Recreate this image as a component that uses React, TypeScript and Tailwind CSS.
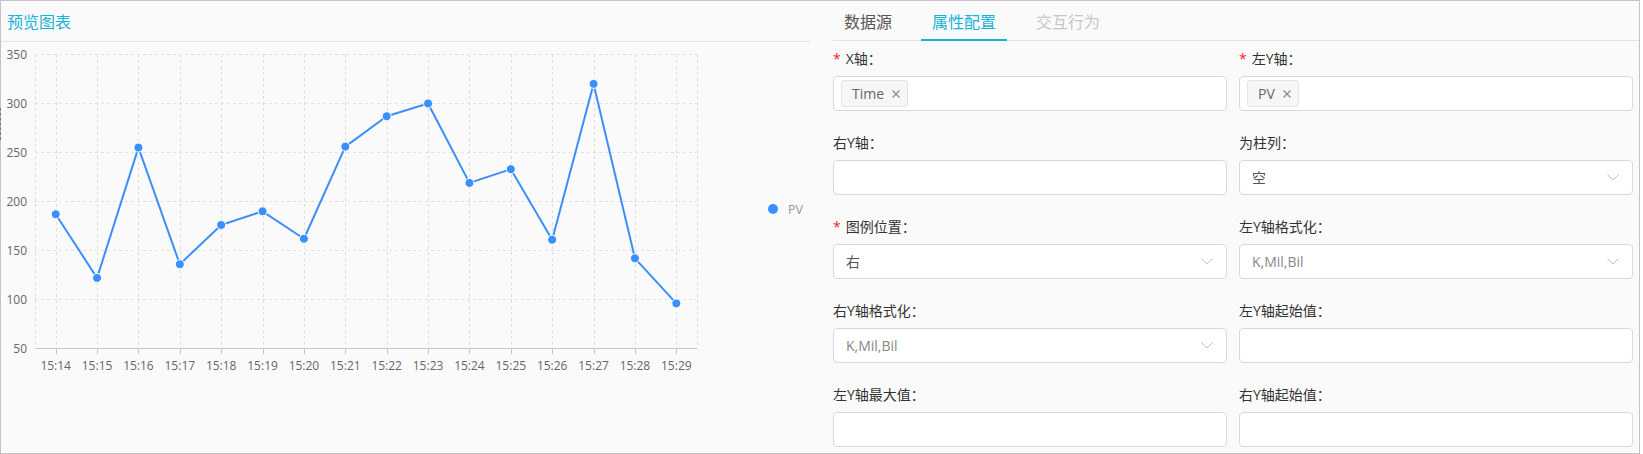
const FONT = '"Open Sans", "Noto Sans CJK SC", sans-serif';

const times = [
  "15:14", "15:15", "15:16", "15:17", "15:18", "15:19", "15:20", "15:21",
  "15:22", "15:23", "15:24", "15:25", "15:26", "15:27", "15:28", "15:29",
];
const pv = [187, 122, 255, 136, 176, 190, 162, 256, 287, 300, 219, 233, 161, 320, 142, 96];

const plotL = 35;
const plotR = 697;
const band = (plotR - plotL) / times.length;
const cx = (i: number) => plotL + band * (i + 0.5);
const cy = (v: number) => 348.5 - (v - 50) * 0.98;

function Chart() {
  const yTicks = [350, 300, 250, 200, 150, 100];
  const line = pv.map((v, i) => `${cx(i)},${cy(v)}`).join(" ");
  return (
    <svg width={809} height={411} viewBox="1 42 809 411" className="block">
      {/* horizontal grid */}
      {yTicks.map((t) => (
        <line
          key={t}
          x1={plotL}
          x2={plotR}
          y1={Math.floor(cy(t)) + 0.5}
          y2={Math.floor(cy(t)) + 0.5}
          stroke="#e3e3e3"
          strokeDasharray="3 3"
        />
      ))}
      {/* vertical grid */}
      {[plotL, ...times.map((_, i) => cx(i)), plotR].map((x, i) => (
        <line
          key={i}
          x1={Math.round(x) + 0.5}
          x2={Math.round(x) + 0.5}
          y1={54}
          y2={348}
          stroke="#dedede"
          strokeDasharray="3 3"
        />
      ))}
      {/* axis */}
      <line x1={plotL} x2={plotR} y1={348.5} y2={348.5} stroke="#c8c8c8" />
      {times.map((_, i) => (
        <line
          key={i}
          x1={Math.round(cx(i)) + 0.5}
          x2={Math.round(cx(i)) + 0.5}
          y1={348}
          y2={354}
          stroke="#c8c8c8"
        />
      ))}
      {[...yTicks, 50].map((t) => (
        <text
          key={t}
          x={27}
          y={cy(t)}
          textAnchor="end"
          dominantBaseline="central"
          fontSize={12}
          fill="#666"
          fontFamily={FONT}
        >
          {t}
        </text>
      ))}
      {times.map((t, i) => (
        <text
          key={t}
          x={cx(i)}
          y={365}
          textAnchor="middle"
          dominantBaseline="central"
          fontSize={12}
          fill="#666"
          fontFamily={FONT}
        >
          {t}
        </text>
      ))}
      <polyline points={line} fill="none" stroke="#3a8ffc" strokeWidth={2} strokeLinejoin="round" />
      {pv.map((v, i) => (
        <circle key={i} cx={cx(i)} cy={cy(v)} r={4.5} fill="#3a8ffc" stroke="#fff" strokeWidth={1} />
      ))}
      {/* legend */}
      <circle cx={773} cy={209} r={5} fill="#3a8ffc" />
      <text x={788} y={209} dominantBaseline="central" fontSize={12.5} fill="#999" fontFamily={FONT}>
        PV
      </text>
    </svg>
  );
}

function Chevron() {
  return (
    <svg width="12" height="7" viewBox="0 0 12 7" className="shrink-0">
      <polyline points="0.5,0.5 6,6 11.5,0.5" fill="none" stroke="#c0c0c0" strokeWidth="1" />
    </svg>
  );
}

function Tag({ text }: { text: string }) {
  return (
    <span className="mt-[3px] ml-[7px] flex h-[27px] items-center rounded-[3px] border border-[#e4e4e4] bg-[#f6f6f6] pl-[10px] pr-[7px] text-[14px] text-[#666]">
      {text}
      <svg width="8" height="8" viewBox="0 0 8 8" className="ml-[8px]">
        <path d="M0.5 0.5 L7.5 7.5 M7.5 0.5 L0.5 7.5" stroke="#888" strokeWidth="1.1" />
      </svg>
    </span>
  );
}

type Field =
  | { kind: "tags"; value: string }
  | { kind: "input" }
  | { kind: "select"; value: string; muted?: boolean };

interface Item {
  label: string;
  required?: boolean;
  field: Field;
}

const items: Item[] = [
  { label: "X轴", required: true, field: { kind: "tags", value: "Time" } },
  { label: "左Y轴", required: true, field: { kind: "tags", value: "PV" } },
  { label: "右Y轴", field: { kind: "input" } },
  { label: "为柱列", field: { kind: "select", value: "空" } },
  { label: "图例位置", required: true, field: { kind: "select", value: "右" } },
  { label: "左Y轴格式化", field: { kind: "select", value: "K,Mil,Bil", muted: true } },
  { label: "右Y轴格式化", field: { kind: "select", value: "K,Mil,Bil", muted: true } },
  { label: "左Y轴起始值", field: { kind: "input" } },
  { label: "左Y轴最大值", field: { kind: "input" } },
  { label: "右Y轴起始值", field: { kind: "input" } },
];

function FormItem({ item }: { item: Item }) {
  const f = item.field;
  return (
    <div className="flex flex-col">
      <div className="mb-[6px] flex h-[22px] items-center text-[14px] leading-[22px] text-[#333]">
        {item.required ? <span className="mr-[5px] text-[#f5222d]">*</span> : null}
        <span>{item.label}：</span>
      </div>
      <div className="flex h-[35px] items-start rounded-[4px] border border-[#d9d9d9] bg-white">
        {f.kind === "tags" ? <Tag text={f.value} /> : null}
        {f.kind === "select" ? (
          <div className="flex h-full w-full items-center justify-between pl-[12px] pr-[13px]">
            <span className={`text-[14px] ${f.muted ? "text-[#888]" : "text-[#555]"}`}>{f.value}</span>
            <Chevron />
          </div>
        ) : null}
      </div>
    </div>
  );
}

export default function App() {
  return (
    <div
      className="flex h-[454px] w-[1640px] border border-[#c4c4c4] bg-[#fafafa]"
      style={{ fontFamily: FONT }}
    >
      <div className="flex w-[809px] flex-col">
        <div className="flex h-[41px] items-center border-b border-[#e3e3e3] pl-[6px] pt-[2px] text-[16px] text-[#17b3d6]">
          预览图表
        </div>
        <div className="relative">
          <div className="absolute -left-px top-[66px] h-[32px] border-l border-dashed border-[#777]" />
          <Chart />
        </div>
      </div>
      <div className="ml-[23px] flex flex-1 flex-col">
        <div className="flex h-[40px] gap-[18px] border-b border-[#e3e3e3]">
          <div className="-mb-px flex items-center border-b-2 border-transparent px-[11px] pt-[4px] text-[16px] text-[#555]">
            数据源
          </div>
          <div className="-mb-px flex items-center border-b-2 border-[#17b3d6] px-[11px] pt-[4px] text-[16px] text-[#17b3d6]">
            属性配置
          </div>
          <div className="-mb-px flex items-center border-b-2 border-transparent px-[11px] pt-[4px] text-[16px] text-[#c8c8c8]">
            交互行为
          </div>
        </div>
        <div className="grid grid-cols-2 gap-x-[12px] gap-y-[21px] pr-[6px] pt-[7px]">
          {items.map((it) => (
            <FormItem key={it.label} item={it} />
          ))}
        </div>
      </div>
    </div>
  );
}
